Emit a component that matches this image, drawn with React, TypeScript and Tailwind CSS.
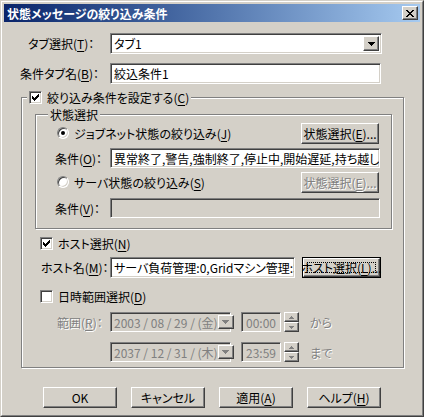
import type { ReactNode } from "react";

const face = "bg-[#D4D0C8]";
const raised =
  "border border-t-white border-l-white border-r-[#404040] border-b-[#404040] shadow-[inset_-1px_-1px_0_#808080] bg-[#D4D0C8]";
const sunken =
  "border border-t-[#808080] border-l-[#808080] border-r-white border-b-white shadow-[inset_1px_1px_0_#404040,inset_-1px_-1px_0_#D4D0C8]";
const etched = "border border-[#808080] shadow-[inset_1px_1px_0_#fff,1px_1px_0_#fff]";
const grayText = "text-[#808080] [text-shadow:1px_1px_0_#fff]";

function U({ children }: { children: ReactNode }) {
  return <span className="underline underline-offset-2">{children}</span>;
}

function Button({
  children,
  width,
  disabled,
  isDefault,
}: {
  children: ReactNode;
  width: string;
  disabled?: boolean;
  isDefault?: boolean;
}) {
  if (isDefault) {
    return (
      <div className={`${width} h-[21px] border border-black`}>
        <div className={`${raised} relative flex h-full w-full items-center justify-center`}>
          <span className="absolute inset-[3px] border border-dotted border-black" />
          <span>{children}</span>
        </div>
      </div>
    );
  }
  return (
    <div
      className={`${raised} ${width} flex h-[21px] items-center justify-center ${disabled ? grayText : ""}`}
    >
      {children}
    </div>
  );
}

function Checkbox({ checked }: { checked?: boolean }) {
  return (
    <div className={`${sunken} flex h-[13px] w-[13px] shrink-0 items-center justify-center bg-white`}>
      {checked && (
        <svg width="7" height="7" viewBox="0 0 7 7" shapeRendering="crispEdges">
          <path
            d="M6 0h1v1H6zM5 1h2v1H5zM0 2h1v1H0zM4 2h3v1H4zM0 3h2v1H0zM3 3h3v1H3zM0 4h5v1H0zM1 5h3v1H1zM2 6h1v1H2z"
            fill="#000"
          />
        </svg>
      )}
    </div>
  );
}

function Radio({ checked }: { checked?: boolean }) {
  return (
    <div className="flex h-[12px] w-[12px] shrink-0 items-center justify-center rounded-full border border-t-[#808080] border-l-[#808080] border-r-white border-b-white bg-white shadow-[inset_1px_1px_0_#404040,inset_-1px_-1px_0_#D4D0C8]">
      {checked && <div className="h-[4px] w-[4px] rounded-full bg-black" />}
    </div>
  );
}

function Arrow({ gray }: { gray?: boolean }) {
  return (
    <svg width="7" height="4" viewBox="0 0 7 4" shapeRendering="crispEdges">
      <path d="M0 0h7v1H0zM1 1h5v1H1zM2 2h3v1H2zM3 3h1v1H3z" fill={gray ? "#808080" : "#000"} />
    </svg>
  );
}

function DropButton({ gray }: { gray?: boolean }) {
  return (
    <div className={`${raised} flex h-full w-[16px] shrink-0 items-center justify-center`}>
      <Arrow gray={gray} />
    </div>
  );
}

function Spin() {
  return (
    <div className="flex h-[20px] w-[15px] flex-col">
      <div className={`${raised} flex h-[10px] items-center justify-center`}>
        <svg width="5" height="3" viewBox="0 0 5 3" shapeRendering="crispEdges">
          <path d="M2 0h1v1H2zM1 1h3v1H1zM0 2h5v1H0z" fill="#808080" />
        </svg>
      </div>
      <div className={`${raised} flex h-[10px] items-center justify-center`}>
        <svg width="5" height="3" viewBox="0 0 5 3" shapeRendering="crispEdges">
          <path d="M0 0h5v1H0zM1 1h3v1H1zM2 2h1v1H2z" fill="#808080" />
        </svg>
      </div>
    </div>
  );
}

function TextBox({
  width,
  value,
  disabled,
  height = "h-[20px]",
}: {
  width: string;
  value?: string;
  disabled?: boolean;
  height?: string;
}) {
  return (
    <div
      className={`${sunken} ${width} ${height} flex shrink-0 items-center overflow-hidden px-[3px] ${
        disabled ? "bg-[#D4D0C8] text-[#808080]" : "bg-white"
      }`}
    >
      {value}
    </div>
  );
}

function DateRow({ date, time, suffix }: { date: string; time: string; suffix: string }) {
  return (
    <div className="flex h-[20px] items-center">
      <div className={`${sunken} flex h-[20px] w-[121px] items-center bg-[#D4D0C8] py-[2px] pl-[3px] pr-[2px]`}>
        <span className="flex-1 text-[#808080]">{date}</span>
        <DropButton gray />
      </div>
      <div className={`${sunken} ml-[10px] flex h-[20px] w-[40px] items-center bg-[#D4D0C8] px-[4px] text-[#808080]`}>
        {time}
      </div>
      <div className="ml-[3px]">
        <Spin />
      </div>
      <span className={`ml-[11px] ${grayText}`}>{suffix}</span>
    </div>
  );
}

export default function App() {
  return (
    <div
      className={`h-[417px] w-[424px] ${face} border border-t-[#D4D0C8] border-l-[#D4D0C8] border-r-[#404040] border-b-[#404040] whitespace-nowrap font-['Noto_Sans_CJK_JP',sans-serif] text-[12px] leading-[13px] text-black [font-feature-settings:'palt']`}
    >
      <div className="flex h-full flex-col border border-t-white border-l-white border-r-[#808080] border-b-[#808080] p-[2px]">
        {/* title bar */}
        <div className="flex h-[18px] shrink-0 items-center bg-gradient-to-r from-[#0A246A] to-[#A6CAF0] pl-[3px] pr-[2px]">
          <span className="flex-1 font-bold text-white">状態メッセージの絞り込み条件</span>
          <div className={`${raised} flex h-[14px] w-[16px] items-center justify-center`}>
            <svg width="8" height="7" viewBox="0 0 8 7" shapeRendering="crispEdges">
              <path
                d="M0 0h2v1H0zM6 0h2v1H6zM1 1h2v1H1zM5 1h2v1H5zM2 2h4v1H2zM3 3h2v1H3zM2 4h4v1H2zM1 5h2v1H1zM5 5h2v1H5zM0 6h2v1H0zM6 6h2v1H6z"
                fill="#000"
              />
            </svg>
          </div>
        </div>

        {/* body */}
        <div className="flex flex-1 flex-col">
          <div className="mt-[11px] flex h-[21px] items-center">
            <div className="w-[106px] shrink-0 pl-[24px]">
              タブ選択(<U>T</U>)：
            </div>
            <div className={`${sunken} flex h-[21px] w-[272px] items-center bg-white py-[2px] pl-[3px] pr-[2px]`}>
              <span className="flex-1">タブ1</span>
              <DropButton />
            </div>
          </div>

          <div className="mt-[9px] flex h-[21px] items-center">
            <div className="w-[106px] shrink-0 pl-[16px]">
              条件タブ名(<U>B</U>)：
            </div>
            <TextBox width="w-[271px]" height="h-[21px]" value="絞込条件1" />
          </div>

          {/* outer group */}
          <div className={`${etched} ml-[17px] mt-[13px] flex h-[271px] w-[383px] flex-col`}>
            <div className={`-mt-[7px] ml-[5px] flex w-fit items-center gap-[5px] ${face} px-[2px]`}>
              <Checkbox checked />
              <span>
                絞り込み条件を設定する(<U>C</U>)
              </span>
            </div>

            {/* inner group */}
            <div className={`${etched} ml-[13px] mt-[10px] flex h-[115px] w-[357px] flex-col`}>
              <div className={`-mt-[7px] ml-[12px] w-fit ${face} px-[2px]`}>状態選択</div>

              <div className="mt-[2px] flex h-[20px] items-center">
                <div className="ml-[21px] flex items-center gap-[5px]">
                  <Radio checked />
                  <span>
                    ジョブネット状態の絞り込み(<U>J</U>)
                  </span>
                </div>
                <div className="ml-auto mr-[12px]">
                  <Button width="w-[78px]">
                    状態選択(<U>E</U>)...
                  </Button>
                </div>
              </div>

              <div className="mt-[5px] flex h-[20px] items-center">
                <div className="w-[74px] shrink-0 pl-[19px]">
                  条件(<U>O</U>)：
                </div>
                <TextBox
                  width="w-[270px]"
                  value="異常終了,警告,強制終了,停止中,開始遅延,持ち越し,実行中"
                />
              </div>

              <div className="mt-[4px] flex h-[20px] items-center">
                <div className="ml-[21px] flex items-center gap-[5px]">
                  <Radio />
                  <span>
                    サーバ状態の絞り込み(<U>S</U>)
                  </span>
                </div>
                <div className="ml-auto mr-[12px]">
                  <Button width="w-[78px]" disabled>
                    状態選択(<U>E</U>)...
                  </Button>
                </div>
              </div>

              <div className="mt-[6px] flex h-[20px] items-center">
                <div className="w-[74px] shrink-0 pl-[19px]">
                  条件(<U>V</U>)：
                </div>
                <TextBox width="w-[270px]" disabled />
              </div>
            </div>

            <div className="ml-[18px] mt-[8px] flex items-center gap-[5px]">
              <Checkbox checked />
              <span>
                ホスト選択(<U>N</U>)
              </span>
            </div>

            <div className="mt-[7px] flex h-[21px] items-center">
              <div className="w-[88px] shrink-0 pl-[19px]">
                ホスト名(<U>M</U>)：
              </div>
              <TextBox width="w-[185px]" height="h-[21px]" value="サーバ負荷管理:0,Gridマシン管理:3," />
              <div className="ml-[7px]">
                <Button width="w-[79px]" isDefault>
                  ホスト選択(<U>L</U>)...
                </Button>
              </div>
            </div>

            <div className="ml-[18px] mt-[12px] flex items-center gap-[5px]">
              <Checkbox />
              <span>
                日時範囲選択(<U>D</U>)
              </span>
            </div>

            <div className="mt-[9px] flex items-center">
              <div className={`w-[88px] shrink-0 pl-[35px] ${grayText}`}>
                範囲(<U>R</U>)：
              </div>
              <DateRow date="2003 / 08 / 29 / (金)" time="00:00" suffix="から" />
            </div>

            <div className="mt-[10px] flex items-center">
              <div className="w-[88px] shrink-0" />
              <DateRow date="2037 / 12 / 31 / (木)" time="23:59" suffix="まで" />
            </div>
          </div>

          {/* bottom buttons */}
          <div className="ml-[39px] mt-[19px] flex gap-[14px]">
            <Button width="w-[74px]">OK</Button>
            <Button width="w-[74px]">キャンセル</Button>
            <Button width="w-[74px]">
              適用(<U>A</U>)
            </Button>
            <Button width="w-[74px]">
              ヘルプ(<U>H</U>)
            </Button>
          </div>
        </div>
      </div>
    </div>
  );
}
